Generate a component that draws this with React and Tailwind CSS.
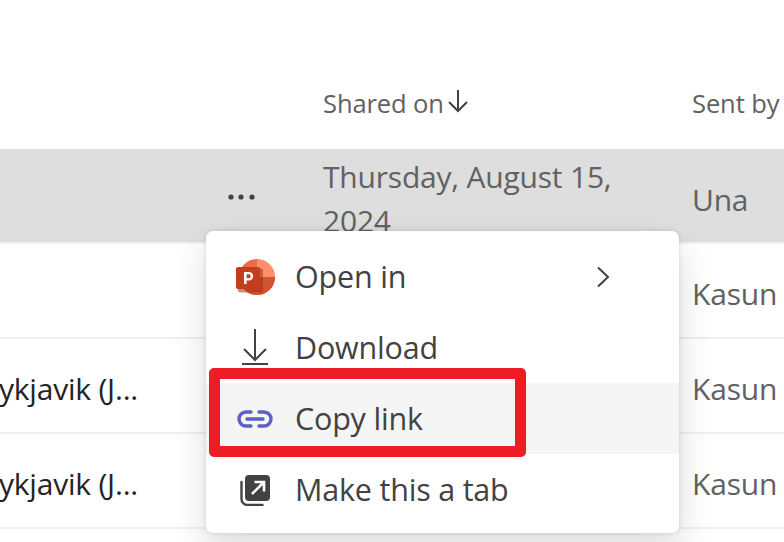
const font = "font-['Open_Sans','Noto_Sans',sans-serif]";

function Row({ name, date, sender, active }) {
  return (
    <div className={`grid grid-cols-[206px_117px_369px_92px] items-center h-[95px] border-b-2 ${active ? 'bg-[#dedede] border-[#f0f0f0]' : 'border-[#f0f0f0]'}`}>
      <div className="flex justify-end overflow-hidden whitespace-nowrap pt-[6px] pr-[68px] text-[#242424]">{name}</div>
      <div className="flex items-center pt-[2px] pl-[21px] text-[#424242]">
        {active && (
          <svg width="32" height="8" viewBox="0 0 32 8" className="fill-current">
            <circle cx="4" cy="4" r="2.6" />
            <circle cx="14" cy="4" r="2.6" />
            <circle cx="25" cy="4" r="2.6" />
          </svg>
        )}
      </div>
      <div className="w-[310px] pt-[6px] leading-[44px] text-[#616161]">{date}</div>
      <div className="overflow-hidden whitespace-nowrap pt-[6px] text-[#616161]">{sender}</div>
    </div>
  );
}

function PowerPoint() {
  return (
    <svg width="40" height="36" viewBox="0 0 40 36" className="ml-[3px]">
      <path d="M21 0a18 18 0 0 0-18 18 18 18 0 0 0 18 18 18 18 0 0 0 18-18H21z" fill="#ed6c47" />
      <path d="M21 0a18 18 0 0 1 18 18H21z" fill="#ff8f6b" />
      <path d="M21 18h18a18 18 0 0 1-18 18 18 18 0 0 1-13-5.5V18z" fill="#d35230" />
      <rect x="2" y="9.5" width="25" height="24" rx="2" fill="#9e3115" opacity="0.55" />
      <rect x="0" y="8" width="24" height="22" rx="2" fill="#c43e1c" />
      <path d="M8 13h5a4.2 4.2 0 0 1 0 8.4h-2.4V25H8zm2.6 2.2v4h2.1a2 2 0 0 0 0-4z" fill="#fff" />
    </svg>
  );
}

function MenuItem({ icon, label, hover, chevron }) {
  return (
    <div className={`flex items-center h-[71px] ${hover ? 'bg-[#f5f5f5]' : ''}`}>
      <div className="w-[89px] flex justify-center pl-[8px]">{icon}</div>
      <span className="flex-1 text-[30.5px] tracking-[-0.2px] text-[#424242]">{label}</span>
      {chevron && (
        <svg width="14" height="22" viewBox="0 0 14 22" fill="none" stroke="#424242" strokeWidth="2" className="mr-[69px]">
          <path d="M2 1.5 L12 11 L2 20.5" />
        </svg>
      )}
    </div>
  );
}

export default function App() {
  return (
    <div className={`relative w-[784px] h-[542px] overflow-hidden bg-white text-[30px] tracking-[-0.2px] ${font}`}>
      <div className="grid grid-cols-[323px_369px_92px] items-center h-[149px] pt-[77px] pb-[20px] text-[25.5px] tracking-[-0.1px] text-[#616161]">
        <div />
        <div className="flex items-center">
          <span>Shared on</span>
          <svg width="22" height="24" viewBox="0 0 22 24" fill="none" stroke="#424242" strokeWidth="2" className="ml-[3px] mb-[4px]">
            <path d="M11 1v21M2 13l9 9 9-9" />
          </svg>
        </div>
        <div className="whitespace-nowrap">Sent by</div>
      </div>
      <Row active name="" date="Thursday, August 15, 2024" sender="Una" />
      <Row name="" date="" sender="Kasun" />
      <Row name="Reykjavik (J..." date="" sender="Kasun" />
      <Row name="Reykjavik (J..." date="" sender="Kasun" />

      <div className="absolute left-[206px] top-[231px] w-[473px] h-[302px] py-[10px] bg-white rounded-[7px] shadow-[0_0_5px_rgba(0,0,0,0.12),0_16px_36px_rgba(0,0,0,0.14)] overflow-hidden">
        <MenuItem icon={<PowerPoint />} label="Open in" chevron />
        <MenuItem
          label="Download"
          icon={
            <svg width="28" height="36" viewBox="0 0 28 36" fill="none" stroke="#424242" strokeWidth="2" className="mb-[2px]">
              <path d="M14 0v30M3 20l11 11 11-11M1 35h26" />
            </svg>
          }
        />
        <MenuItem
          hover
          label="Copy link"
          icon={
            <svg width="36" height="18" viewBox="0 0 36 18" fill="none" stroke="#5b5fc7" strokeWidth="3.4" strokeLinecap="round">
              <path d="M14 2H9a7 7 0 0 0 0 14h5M22 2h5a7 7 0 0 1 0 14h-5M10 9h16" />
            </svg>
          }
        />
        <MenuItem
          label="Make this a tab"
          icon={
            <svg width="32" height="32" viewBox="0 0 32 32">
              <path d="M2.5 8v17a6 6 0 0 0 6 6h15" fill="none" stroke="#424242" strokeWidth="2.4" strokeLinecap="round" />
              <rect x="6" y="1" width="25" height="26" rx="4" fill="#424242" />
              <path d="M13 20 24 9M15.5 8H25v9.5" fill="none" stroke="#fff" strokeWidth="2.6" />
            </svg>
          }
        />
      </div>

      <div className="absolute left-[209px] top-[368px] w-[317px] h-[89px] border-[11px] border-[#ee1c25] rounded-[5px]" />
    </div>
  );
}
